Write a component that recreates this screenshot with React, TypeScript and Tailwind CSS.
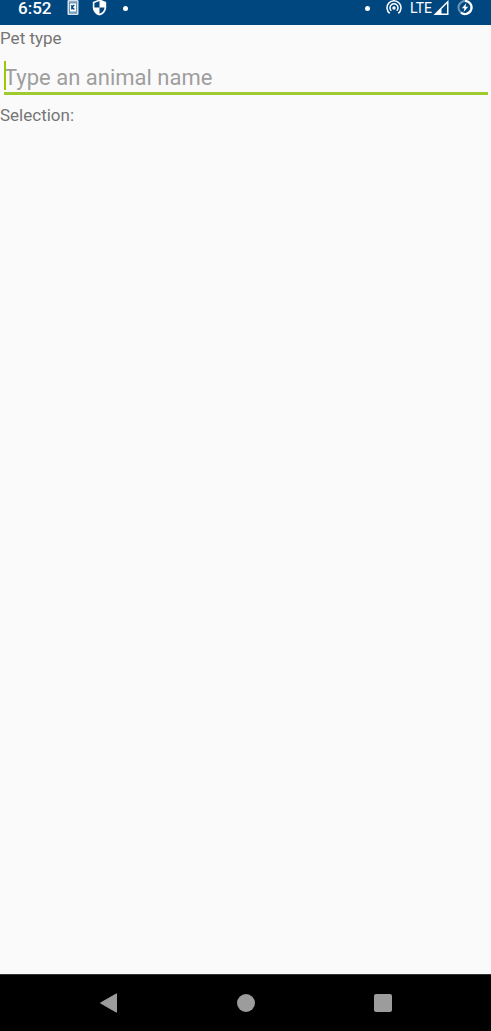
import { useState } from "react";

function StatusBar() {
  return (
    <header className="flex h-[25px] items-start justify-between bg-[#004780] pr-[18px] pl-[18px] text-white">
      <div className="flex h-4 items-center">
        <span className="w-[49px] text-[17px] leading-4 font-medium">6:52</span>
        <svg className="h-4 w-3" viewBox="0 0 12 16" aria-hidden="true">
          <rect x="0.5" y="0" width="11" height="15" rx="1" fill="#d5e2ec" />
          <rect x="2" y="1.5" width="8" height="1" fill="#4d7fa8" />
          <rect x="2" y="12.5" width="8" height="1" fill="#4d7fa8" />
          <rect x="2.5" y="3" width="7" height="9" fill="#fff" stroke="#4d7fa8" strokeWidth="0.8" />
          <path d="M4.8 5v4.500M7.300 5 5 7.200 7.300 9.500" fill="none" stroke="#004780" strokeWidth="1.3" />
        </svg>
        <svg className="ml-3 h-4 w-4" viewBox="0 0 16 16" aria-hidden="true">
          <path d="M8.5-.7 15.2 2v5.2c0 4-2.8 7.2-6.7 8.4C4.6 14.4 1.8 11.2 1.8 7.2V2z" fill="#fff" />
          <path d="M8.5 1v6.500H3.400V3z" fill="#004780" />
          <path d="M8.5 7.500h5.100c-.3 3-2.300 5.300-5.100 6.300z" fill="#004780" />
        </svg>
        <span className="ml-4 h-[5px] w-[5px] rounded-full bg-white" />
      </div>
      <div className="flex h-4 items-center">
        <span className="h-[5px] w-[5px] rounded-full bg-white" />
        <svg className="ml-4 h-4 w-4" viewBox="0 0 16 16" fill="none" stroke="#fff" strokeWidth="1.5" aria-hidden="true">
          <path d="M3.700 13.300A7 7 0 1 1 12.300 13.300" />
          <path d="M5.300 10.800A4 4 0 1 1 10.700 10.800" />
          <circle cx="8" cy="8" r="1.700" fill="#fff" stroke="none" />
        </svg>
        <span className="ml-2 text-sm leading-4">LTE</span>
        <svg className="ml-px h-4 w-4" viewBox="0 0 16 16" aria-hidden="true">
          <path d="M15.500 0v15H.5z" fill="#fff" />
          <path d="M14 3.500v10H8.500V9z" fill="#004780" />
        </svg>
        <svg className="ml-2 h-4 w-4" viewBox="0 0 16 16" fill="none" aria-hidden="true">
          <circle cx="8" cy="7.500" r="6.500" stroke="#6693b5" strokeWidth="2.200" />
          <path d="M8 1A6.500 6.500 0 1 1 4 12.600" stroke="#fff" strokeWidth="2.200" />
          <path d="M9.300 3.300 4.800 8.300h2.600l-.8 3.700 4.600-5.200H8.500z" fill="#fff" />
        </svg>
      </div>
    </header>
  );
}

function NavBar() {
  return (
    <nav className="flex h-[57px] items-center justify-center border-t border-[#333] bg-black text-[#9c9c9c]">
      <button type="button" aria-label="Back" className="flex w-[137px] justify-center">
        <svg className="h-5 w-5" viewBox="0 0 20 20" aria-hidden="true">
          <path d="M17.500.8v18.400L1.500 10z" fill="currentColor" stroke="currentColor" strokeWidth="1" strokeLinejoin="round" />
        </svg>
      </button>
      <button type="button" aria-label="Home" className="flex w-[137px] justify-center">
        <span className="h-[18px] w-[18px] rounded-full bg-current" />
      </button>
      <button type="button" aria-label="Recent apps" className="flex w-[137px] justify-center">
        <span className="h-[18px] w-[18px] rounded-xs bg-current" />
      </button>
    </nav>
  );
}

export default function App() {
  const [pet, setPet] = useState("");

  return (
    <div className="flex min-h-screen flex-col bg-[#fafafa] font-['Roboto',sans-serif] text-[#757575]">
      <StatusBar />
      <main className="flex-1">
        <label htmlFor="pet" className="block text-[17px] leading-[26px]">
          Pet type
        </label>
        <div className="relative mt-[9px] mr-[3px] ml-1 border-b-3 border-[#9fca32]">
          <input
            id="pet"
            type="text"
            value={pet}
            onChange={(e) => setPet(e.target.value)}
            placeholder="Type an animal name"
            className="block h-8 w-full bg-transparent pt-[2px] text-[22px] leading-[30px] text-[#212121] caret-[#99cc00] outline-none placeholder:text-[#9e9e9e]"
          />
          {/* text cursor */}
          {pet === "" && <span className="pointer-events-none absolute top-[1px] left-0 h-[29px] w-[2px] bg-[#99cc00]" />}
        </div>
        <p className="mt-[7px] text-[17px] leading-[26px]">Selection: {pet}</p>
      </main>
      <NavBar />
    </div>
  );
}
